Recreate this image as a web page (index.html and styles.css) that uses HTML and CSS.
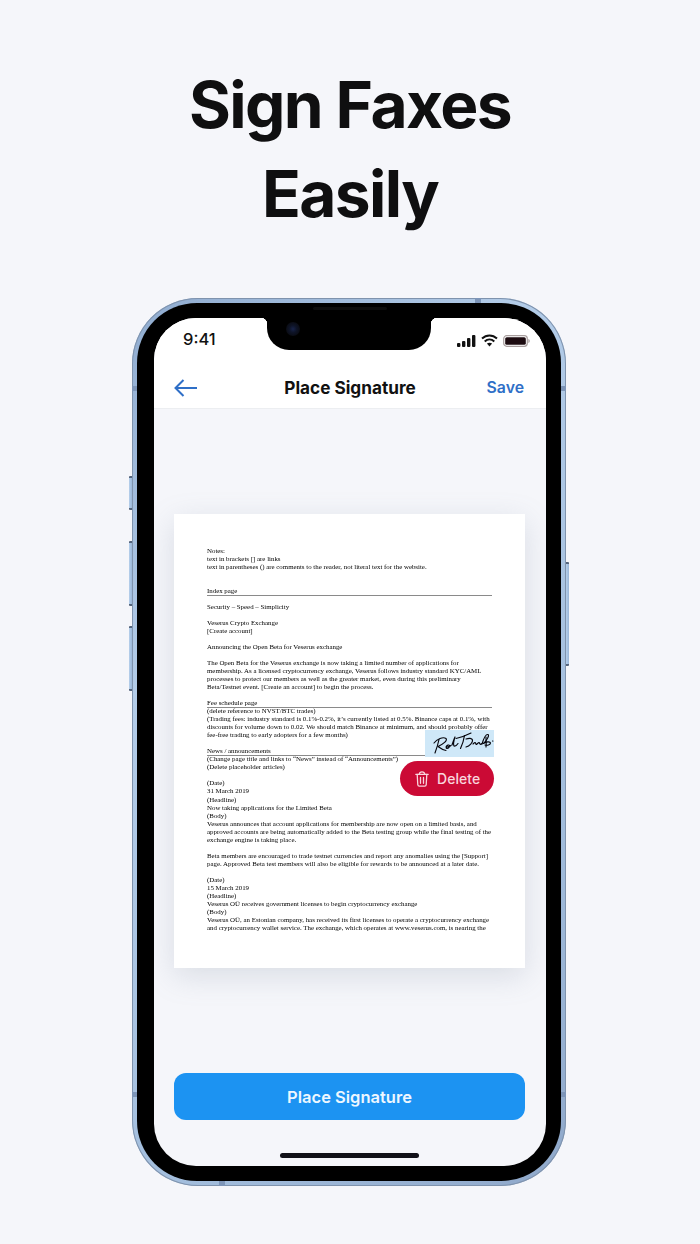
FILE: index.html
```html
<!DOCTYPE html>
<html lang="en">
<head>
<meta charset="utf-8">
<title>Sign Faxes Easily</title>
<link rel="stylesheet" href="styles.css">
</head>
<body>
<h1 class="headline">Sign Faxes<br>Easily</h1>
<div class="phone">
  <span class="side side-l1"></span>
  <span class="side side-l2"></span>
  <span class="side side-l3"></span>
  <span class="side side-r1"></span>
  <span class="band band-l"></span>
  <span class="band band-r"></span>
  <span class="band band-l2"></span>
  <span class="band band-r2"></span>
  <span class="band-h band-t"></span>
  <span class="band-h band-b"></span>
  <div class="bezel">
    <span class="speaker"></span>
    <div class="screen">
      <div class="notch"><span class="camera"></span></div>
      <header class="top">
        <div class="status">
          <span class="time">9:41</span>
          <div class="status-icons">
            <svg width="19" height="12" viewBox="0 0 19 12"><g fill="#111"><rect x="0" y="8" width="3.400" height="4" rx="1"/><rect x="5" y="6" width="3.400" height="6" rx="1"/><rect x="10" y="3" width="3.400" height="9" rx="1"/><rect x="15" y="0" width="3.400" height="12" rx="1"/></g></svg>
            <svg width="17" height="13" viewBox="0 0 17 13"><g fill="none" stroke="#111" stroke-width="2"><path d="M1 4.600C5.400.5 11.600.5 16 4.600"/><path d="M3.700 7.400c2.800-2.500 6.800-2.500 9.600 0"/></g><path d="M5.900 9.600c1.600-1.300 3.600-1.300 5.200 0L8.500 12.600z" fill="#111"/></svg>
            <svg width="27" height="12" viewBox="0 0 27 12"><rect x=".7" y=".7" width="23.600" height="10.600" rx="3" fill="#fff" stroke="#a89e9e" stroke-width="1.200"/><rect x="2.200" y="2.200" width="20.600" height="7.600" rx="1.600" fill="#1c0b10"/><path d="M25.400 4v4c.8-.3 1.300-1 1.300-2s-.5-1.700-1.300-2z" fill="#a89e9e"/></svg>
          </div>
        </div>
        <nav class="nav">
          <svg class="back" width="24" height="18" viewBox="0 0 24 18"><path d="M23 9H1.500M9.500 1 1.500 9l8 8" fill="none" stroke="#2f6fc7" stroke-width="2"/></svg>
          <span class="title">Place Signature</span>
          <span class="save">Save</span>
        </nav>
      </header>
      <main class="canvas">
        <article class="doc">
          <div class="doc-text">
            <p>Notes:</p>
            <p>text in brackets [] are links</p>
            <p class="gap2">text in parentheses () are comments to the reader, not literal text for the website.</p>
            <p class="rule gap1">Index page</p>
            <p class="gap1">Security – Speed – Simplicity</p>
            <p>Veserus Crypto Exchange</p>
            <p class="gap1">[Create account]</p>
            <p class="gap1">Announcing the Open Beta for Veserus exchange</p>
            <p>The Open Beta for the Veserus exchange is now taking a limited number of applications for</p>
            <p>membership. As a licensed cryptocurrency exchange, Veserus follows industry standard KYC/AML</p>
            <p>processes to protect our members as well as the greater market, even during this preliminary</p>
            <p class="gap1">Beta/Testnet event. [Create an account] to begin the process.</p>
            <p class="rule">Fee schedule page</p>
            <p>(delete reference to NVST/BTC trades)</p>
            <p>(Trading fees: industry standard is 0.1%-0.2%, it’s currently listed at 0.5%. Binance caps at 0.1%, with</p>
            <p>discounts for volume down to 0.02. We should match Binance at minimum, and should probably offer</p>
            <p class="gap1">fee-free trading to early adopters for a few months)</p>
            <p class="rule">News / announcements</p>
            <p>(Change page title and links to “News” instead of “Announcements”)</p>
            <p class="gap1">(Delete placeholder articles)</p>
            <p>(Date)</p>
            <p>31 March 2019</p>
            <p>(Headline)</p>
            <p>Now taking applications for the Limited Beta</p>
            <p>(Body)</p>
            <p>Veserus announces that account applications for membership are now open on a limited basis, and</p>
            <p>approved accounts are being automatically added to the Beta testing group while the final testing of the</p>
            <p class="gap1">exchange engine is taking place.</p>
            <p>Beta members are encouraged to trade testnet currencies and report any anomalies using the [Support]</p>
            <p class="gap1">page. Approved Beta test members will also be eligible for rewards to be announced at a later date.</p>
            <p>(Date)</p>
            <p>15 March 2019</p>
            <p>(Headline)</p>
            <p>Veserus OÜ receives government licenses to begin cryptocurrency exchange</p>
            <p>(Body)</p>
            <p>Veserus OÜ, an Estonian company, has received its first licenses to operate a cryptocurrency exchange</p>
            <p>and cryptocurrency wallet service. The exchange, which operates at www.veserus.com, is nearing the</p>
          </div>
          <div class="sig">
            <svg width="69" height="27" viewBox="0 0 69 27"><g fill="none" stroke="#05050c" stroke-width="1.150" stroke-linecap="round" stroke-linejoin="round"><path d="M9 13C12 9 18 6.500 21 8.500 23 10.500 17 15 13 16.500 15 18 18 20 21 20.500"/><path d="M14 9.500C13 14 11.500 19 10 23"/><path d="M21 17c1-2 3-2.500 3.500-1.500.5 1.200-1 3-2.500 3-1 0-1-1 0-1.500 2-.5 3-.5 4-1.500"/><path d="M27 15c1-3 2-6 3-8-1 3-2 7-1 9 1.500.5 3-1 4-2.500"/><path d="M31 8.500C36 7.500 41 5.500 46 3"/><path d="M39.500 5.500C39 9 37.500 14 35.500 18.500"/><path d="M41 9c3-1 6-1 6.500 1 .5 2.500-3 6-6.500 7"/><path d="M48 14c1-1 2-2 2.500-1 .3 1 .5 2 1.500 1 1-1 2-2 2.500-1 .3 1.200 1 2 2.500.5"/><path d="M57 14C58.500 9 61 4 63 4.500 65 5.500 61 11 58.500 13.500 61 12 65 11 65.500 13 65.500 15 62 15.500 60 15"/><path d="M61 7c0 3 .5 6 0 10"/><path d="M67.500 11h.4"/></g></svg>
          </div>
          <button class="delete" type="button">
            <svg width="14" height="16" viewBox="0 0 14 16"><g fill="none" stroke="#f9d5dd" stroke-width="1.300" stroke-linecap="round" stroke-linejoin="round"><path d="M.8 3.300h12.400"/><path d="M4.300 3.100c.1-1.500.8-2.300 2.700-2.300s2.600.8 2.700 2.300"/><path d="M2.200 3.500l.6 10.300c.1.900.6 1.400 1.400 1.400h5.600c.8 0 1.300-.5 1.400-1.400l.6-10.300"/><path d="M5.500 6.500v5.800M8.500 6.500v5.800"/></g></svg>
            <span>Delete</span>
          </button>
        </article>
        <button class="place" type="button">Place Signature</button>
        <span class="home"></span>
      </main>
    </div>
  </div>
</div>
</body>
</html>
```
FILE: styles.css
```css
* { box-sizing: border-box; }
html, body { margin: 0; padding: 0; }
body {
  width: 700px;
  height: 1244px;
  overflow: hidden;
  background: #f5f6fa;
  font-family: Inter, "Noto Sans", sans-serif;
  color: #111;
  display: flex;
  flex-direction: column;
  align-items: center;
}
.headline {
  margin: 60px 0 0;
  height: 238px;
  font-size: 64px;
  line-height: 89px;
  font-weight: 700;
  text-align: center;
  color: #0f0f10;
  letter-spacing: -1.600px;
}
.phone {
  position: relative;
  width: 434px;
  height: 888px;
  margin-right: 2px;
  padding: 5px;
  border-radius: 66px;
  background: linear-gradient(135deg, #8fabcf, #b3cce8 30%, #a3bedd 70%, #8fa8ca);
  box-shadow: inset 0 0 0 1px #7f93ad;
}
.bezel {
  position: relative;
  width: 424px;
  height: 878px;
  padding: 15px 15px 14px 17px;
  border-radius: 60px;
  background: #000;
}
.screen {
  position: relative;
  width: 392px;
  height: 848px;
  border-radius: 42px;
  overflow: hidden;
  background: #f5f6fa;
  display: flex;
  flex-direction: column;
}
.side {
  position: absolute;
  width: 3px;
  background: linear-gradient(90deg, #b6d0ec, #9ab6d8);
  border-top: 2px solid #55657c;
  border-bottom: 2px solid #55657c;
}
.side-l1 { left: -3px; top: 178px; height: 34px; border-radius: 1px 0 0 1px; }
.side-l2 { left: -3px; top: 243px; height: 65px; border-radius: 1px 0 0 1px; }
.side-l3 { left: -3px; top: 328px; height: 65px; border-radius: 1px 0 0 1px; }
.side-r1 { right: -3px; top: 264px; height: 104px; border-radius: 0 1px 1px 0; }
.band { position: absolute; width: 5px; height: 5px; background: #7d95b8; }
.band-l { left: 0; top: 88px; }
.band-r { right: 0; top: 88px; }
.band-l2 { left: 0; top: 794px; }
.band-r2 { right: 0; top: 794px; }
.band-h { position: absolute; width: 6px; height: 5px; background: #7d95b8; }
.band-t { left: 343px; top: 0; }
.band-b { left: 87px; bottom: 0; }
.speaker {
  position: absolute;
  left: 176px;
  top: 4px;
  width: 74px;
  height: 3px;
  border-radius: 2px;
  background: #0d0d0d;
}
.notch {
  position: absolute;
  left: 113px;
  top: 0;
  width: 164px;
  height: 32px;
  background: #000;
  border-radius: 0 0 22px 22px;
  z-index: 2;
}
.notch::before, .notch::after {
  content: "";
  position: absolute;
  top: 0;
  width: 6px;
  height: 6px;
  background: radial-gradient(circle at 0 100%, transparent 6px, #000 6.500px);
}
.notch::before { left: -6px; }
.notch::after { right: -6px; transform: scaleX(-1); }
.camera {
  position: absolute;
  left: 19px;
  top: 4px;
  width: 14px;
  height: 14px;
  border-radius: 50%;
  background: radial-gradient(circle, #18234a 0, #0e1428 35%, #0a0c14 70%);
}
.top {
  height: 91px;
  flex: none;
  background: #fff;
  border-bottom: 1px solid #eceef1;
  display: flex;
  flex-direction: column;
}
.status {
  height: 48px;
  flex: none;
  padding: 11px 16px 0 29px;
  display: flex;
  justify-content: space-between;
  align-items: flex-start;
}
.time {
  font-size: 16.500px;
  line-height: 20px;
  font-weight: 500;
  color: #111;
}
.status-icons {
  display: flex;
  align-items: center;
  gap: 5px;
  padding-top: 5px;
}
.nav {
  position: relative;
  flex: 1;
  padding: 0 22px 0 20px;
  display: flex;
  align-items: center;
  justify-content: space-between;
}
.back { margin-top: 2px; }
.title {
  position: absolute;
  left: 0;
  right: 0;
  text-align: center;
  font-size: 17.200px;
  font-weight: 700;
  color: #111;
}
.save {
  font-size: 15.800px;
  font-weight: 600;
  color: #2f6fc7;
}
.canvas {
  position: relative;
  flex: 1;
  padding: 105px 21px 0 20px;
  display: flex;
  flex-direction: column;
  align-items: stretch;
}
.doc {
  position: relative;
  height: 454px;
  padding: 33px 32px 0 33px;
  background: #fff;
  box-shadow: 0 8px 28px rgba(120, 130, 155, .22);
}
.doc-text {
  filter: blur(.3px);
  font-family: "Liberation Serif", "Times New Roman", serif;
  font-size: 6.880px;
  line-height: 8.030px;
  color: #000;
}
.doc-text p {
  margin: 0;
  height: 8.030px;
  white-space: nowrap;
}
.doc-text .gap1 { margin-bottom: 8.030px; }
.doc-text .gap2 { margin-bottom: 16.060px; }
.doc-text .rule { border-bottom: 1px solid #8a8a8a; width: 285px; height: 9.030px; margin-bottom: -1px; }
.doc-text .rule.gap1 { margin-bottom: 7.030px; }
.sig {
  position: absolute;
  left: 251px;
  top: 216px;
  width: 69px;
  height: 27px;
  background: #cfe8f8;
}
.sig svg { display: block; }
.delete {
  position: absolute;
  left: 226px;
  top: 247px;
  width: 94px;
  height: 35px;
  border: 0;
  padding: 0 0 0 15px;
  border-radius: 18px;
  background: #cb0a35;
  color: #f9d5dd;
  font-family: Inter, sans-serif;
  font-size: 14px;
  font-weight: 500;
  letter-spacing: .05px;
  display: flex;
  align-items: center;
  gap: 8px;
}
.delete svg { flex: none; }
.place {
  margin-top: 105px;
  height: 47px;
  flex: none;
  border: 0;
  border-radius: 12px;
  background: #1c93f2;
  color: #eef7ff;
  font-family: Inter, sans-serif;
  font-size: 16.500px;
  font-weight: 600;
}
.home {
  position: absolute;
  left: 126px;
  bottom: 8px;
  width: 139px;
  height: 5px;
  border-radius: 3px;
  background: #111118;
}
```
